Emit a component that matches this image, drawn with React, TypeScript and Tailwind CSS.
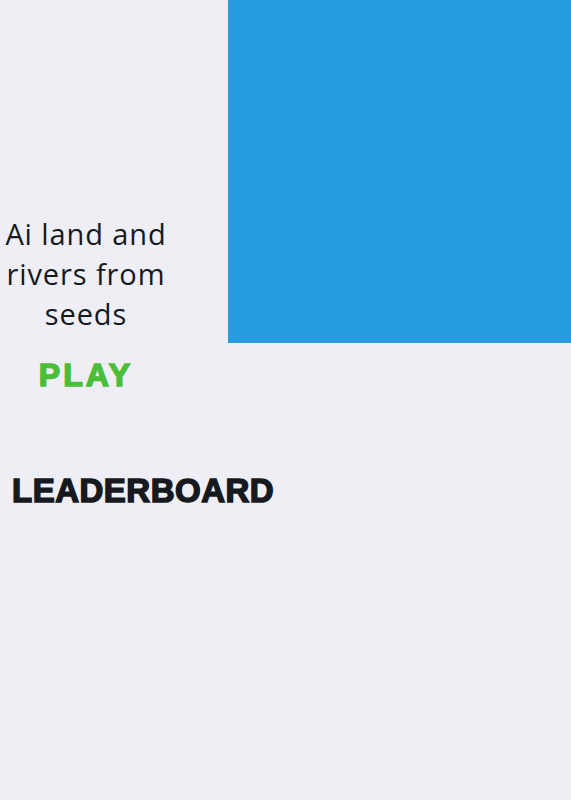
export default function App() {
  return (
    <main className="min-h-[800px] w-full bg-[#eeeef4] font-['Open_Sans',sans-serif] text-[#16191d]">
      <div className="flex">
        <section className="w-[172px] pt-[214px] text-center">
          <h1 className="text-[29px] leading-[40px] font-normal tracking-[0.9px]">Ai land and rivers from seeds</h1>
          <button className="mt-[21px] font-['Liberation_Sans',sans-serif] text-[32px] font-black leading-[40px] tracking-[3px] text-[#4cbd3a] [-webkit-text-stroke:1.5px_#4cbd3a]">
            PLAY
          </button>
        </section>
        <div className="ml-[56px] h-[343px] flex-1 bg-[#259ddf]" />
      </div>
      <h2 className="mt-[76px] pl-[12px] font-['Liberation_Sans',sans-serif] text-[33px] font-black leading-[40px] tracking-[0.5px] [-webkit-text-stroke:1.5px_#16191d]">
        LEADERBOARD
      </h2>
    </main>
  );
}
